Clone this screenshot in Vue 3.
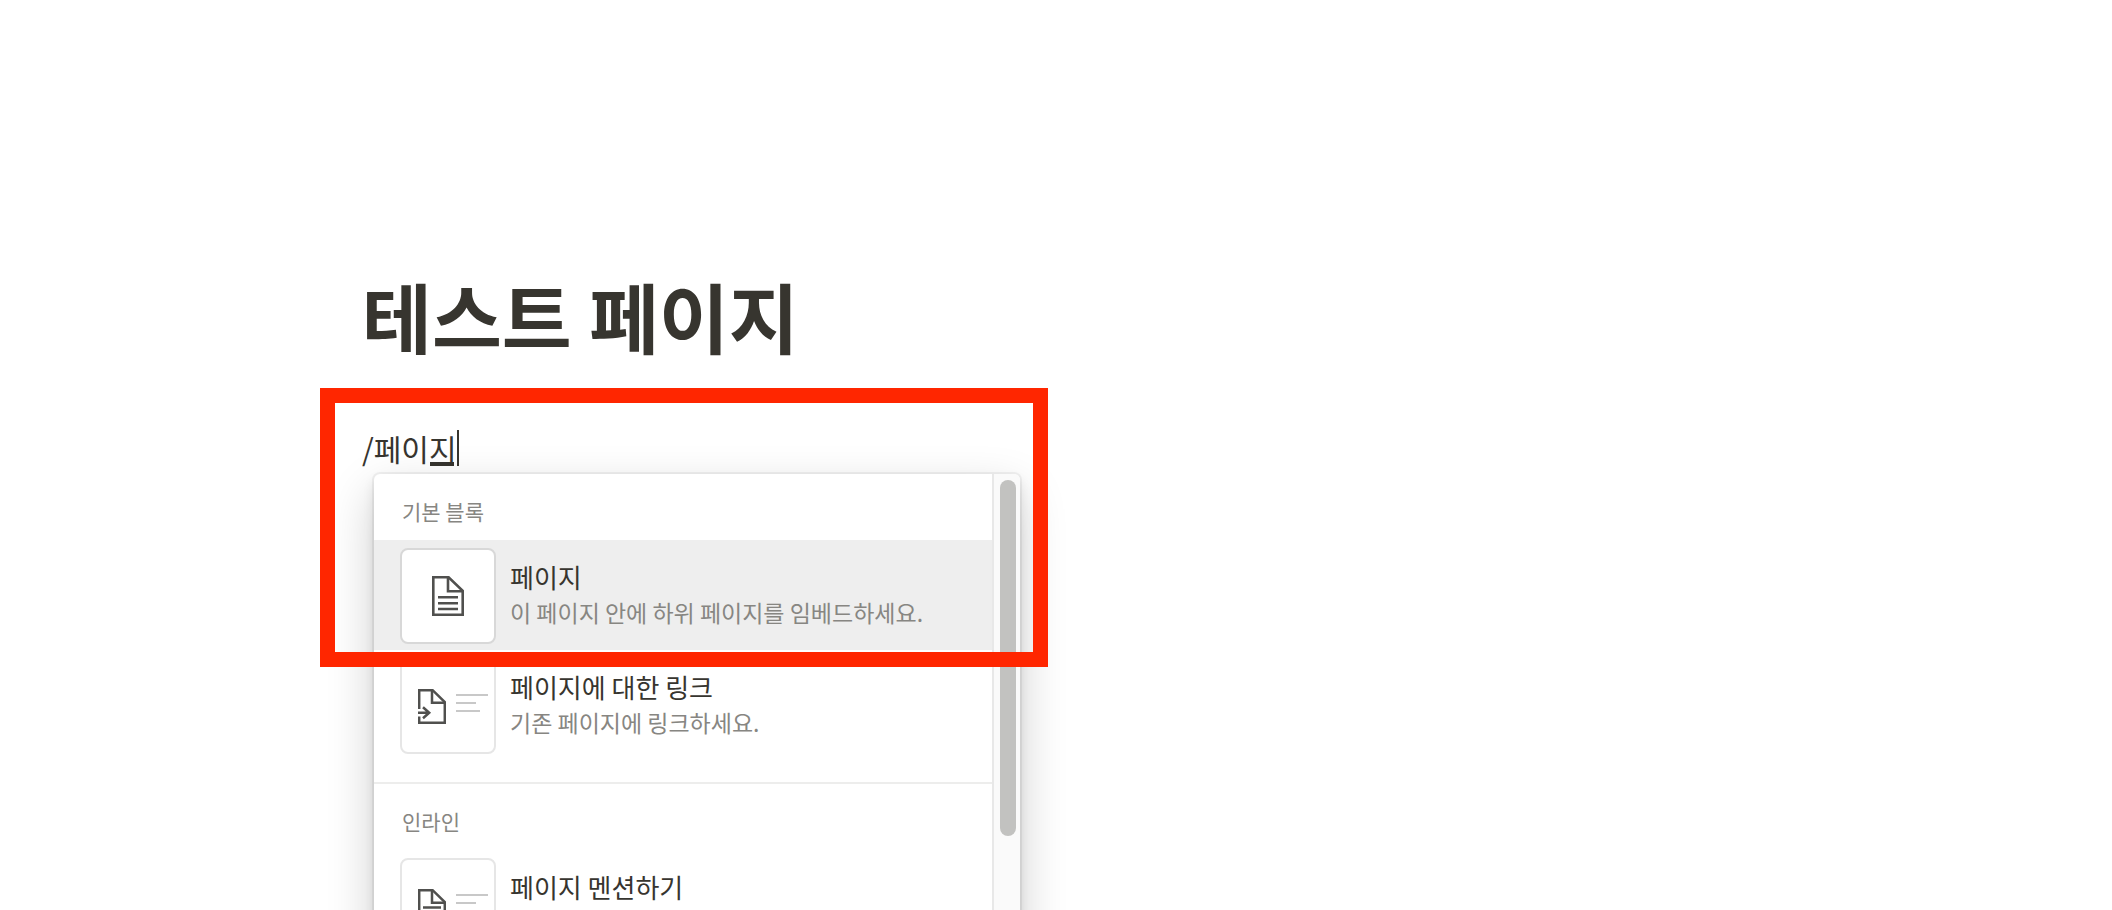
<template>
  <main class="page">
    <h1 class="page-title">테스트 페이지</h1>

    <div class="editor">
      <div class="block" role="textbox" aria-label="블록" contenteditable="true" spellcheck="false">/페이<span class="composing">지</span><span class="caret"></span></div>

      <div class="slash-menu">
        <div class="menu-list">
          <section v-for="group in groups" :key="group.label" class="menu-group">
            <h2 class="group-label">{{ group.label }}</h2>
            <button
              v-for="item in group.items"
              :key="item.title"
              type="button"
              class="menu-item"
              :class="{ active: item.title === activeItem }"
              @mouseenter="activeItem = item.title"
            >
              <span class="thumb">
                <svg v-if="item.icon === 'page'" width="32" height="40" viewBox="0 0 32 40" fill="none" stroke="#50504e" stroke-width="2.6">
                  <path d="M1.3 1.3H16.6L30.7 14.8V38.7H1.3Z" />
                  <path d="M16 1.3V15.2H30.7" />
                  <path d="M6 21.2H26M6 27.2H26M6 33H26" />
                </svg>
                <svg v-else width="28" height="35" viewBox="0 0 28 35" fill="none" stroke="#50504e" stroke-width="2.5">
                  <template v-if="item.icon === 'link'">
                    <path d="M1.2 20V1.2H14.6L26.8 13V33.8H1.2V27.5" />
                    <path d="M0 23.7H11.5M5 18.2L11.2 23.7L5 29.2" />
                  </template>
                  <template v-else>
                    <path d="M1.2 1.2H14.6L26.8 13V33.8H1.2Z" />
                    <path d="M5 18.6H23M5 23.6H23M5 28.6H23" />
                  </template>
                  <path d="M14 1.2V13.8H26.8" />
                </svg>
                <span v-if="item.icon !== 'page'" class="text-lines">
                  <i class="long"></i>
                  <i class="short"></i>
                  <i class="medium"></i>
                </span>
              </span>
              <span class="item-text">
                <span class="item-title">{{ item.title }}</span>
                <span v-if="item.description" class="item-description">{{ item.description }}</span>
              </span>
            </button>
          </section>
        </div>
        <div class="scroll-track">
          <div class="scroll-thumb"></div>
        </div>
      </div>

      <div class="highlight"></div>
    </div>
  </main>
</template>

<script setup>
import { ref } from 'vue'

const activeItem = ref('페이지')

const groups = [
  {
    label: '기본 블록',
    items: [
      { title: '페이지', description: '이 페이지 안에 하위 페이지를 임베드하세요.', icon: 'page' },
      { title: '페이지에 대한 링크', description: '기존 페이지에 링크하세요.', icon: 'link' }
    ]
  },
  {
    label: '인라인',
    items: [{ title: '페이지 멘션하기', icon: 'mention' }]
  }
]
</script>

<style>
body {
  margin: 0;
  background: #ffffff;
}
</style>

<style scoped>
.page {
  box-sizing: border-box;
  height: 100vh;
  padding: 260px 96px 0 362px;
  overflow: hidden;
  color: #37352f;
  font-family: 'Noto Sans CJK KR', sans-serif;
}

.page-title {
  margin: 0;
  font-size: 76px;
  line-height: 110px;
  font-weight: 700;
}

.editor {
  position: relative;
  padding-top: 56px;
}

.block {
  display: flex;
  align-items: center;
  height: 44px;
  font-size: 30px;
  line-height: 36px;
  outline: none;
}

.composing {
  position: relative;
}

.composing::after {
  content: '';
  position: absolute;
  right: 3px;
  bottom: 0;
  left: 1px;
  height: 4px;
  background: #37352f;
}

.caret {
  width: 2px;
  height: 36px;
  background: #37352f;
}

.slash-menu {
  position: absolute;
  top: 104px;
  left: 12px;
  display: flex;
  width: 646px;
  min-height: 640px;
  overflow: hidden;
  border-radius: 6px;
  background: #ffffff;
  box-shadow:
    0 0 0 2px rgba(15, 15, 15, 0.05),
    0 6px 12px rgba(15, 15, 15, 0.1),
    0 18px 48px rgba(15, 15, 15, 0.2);
}

.menu-list {
  flex: 1;
}

.menu-group + .menu-group {
  margin-top: 22px;
  border-top: 2px solid #ededec;
}

.group-label {
  margin: 0;
  padding: 21px 28px 13px;
  color: #878682;
  font-size: 21px;
  line-height: 32px;
  font-weight: 400;
}

.menu-item {
  display: flex;
  gap: 14px;
  width: 100%;
  padding: 8px 26px 6px;
  border: none;
  background: transparent;
  color: inherit;
  font-family: inherit;
  text-align: left;
  cursor: pointer;
}

.menu-item.active {
  background: #eeeeee;
}

.thumb {
  box-sizing: border-box;
  display: flex;
  flex-shrink: 0;
  align-items: center;
  justify-content: center;
  gap: 10px;
  width: 96px;
  height: 96px;
  padding-left: 10px;
  border: 2px solid #e6e6e6;
  border-radius: 8px;
  background: #ffffff;
}

.thumb svg:only-child {
  margin-right: 10px;
}

.active .thumb {
  border-color: #d8d8d8;
}

.text-lines {
  display: flex;
  flex-direction: column;
  gap: 6px;
  width: 32px;
  margin-bottom: 6px;
}

.text-lines i {
  height: 2px;
  background: #c8c8c8;
}

.text-lines .short {
  width: 20px;
}

.text-lines .medium {
  width: 24px;
}

.item-text {
  display: flex;
  flex-direction: column;
  padding-top: 11px;
}

.item-title {
  font-size: 26px;
  line-height: 36px;
}

.item-description {
  color: #878682;
  font-size: 23px;
  line-height: 34px;
}

.scroll-track {
  box-sizing: border-box;
  width: 28px;
  padding: 6px 4px 6px 6px;
  border-left: 2px solid #e8e8e8;
  background: #fafafa;
}

.scroll-thumb {
  width: 16px;
  height: 356px;
  border-radius: 8px;
  background: #c2c2c0;
}

.highlight {
  position: absolute;
  top: 18px;
  left: -42px;
  box-sizing: border-box;
  width: 728px;
  height: 279px;
  border: 15px solid #ff2600;
  pointer-events: none;
}
</style>
